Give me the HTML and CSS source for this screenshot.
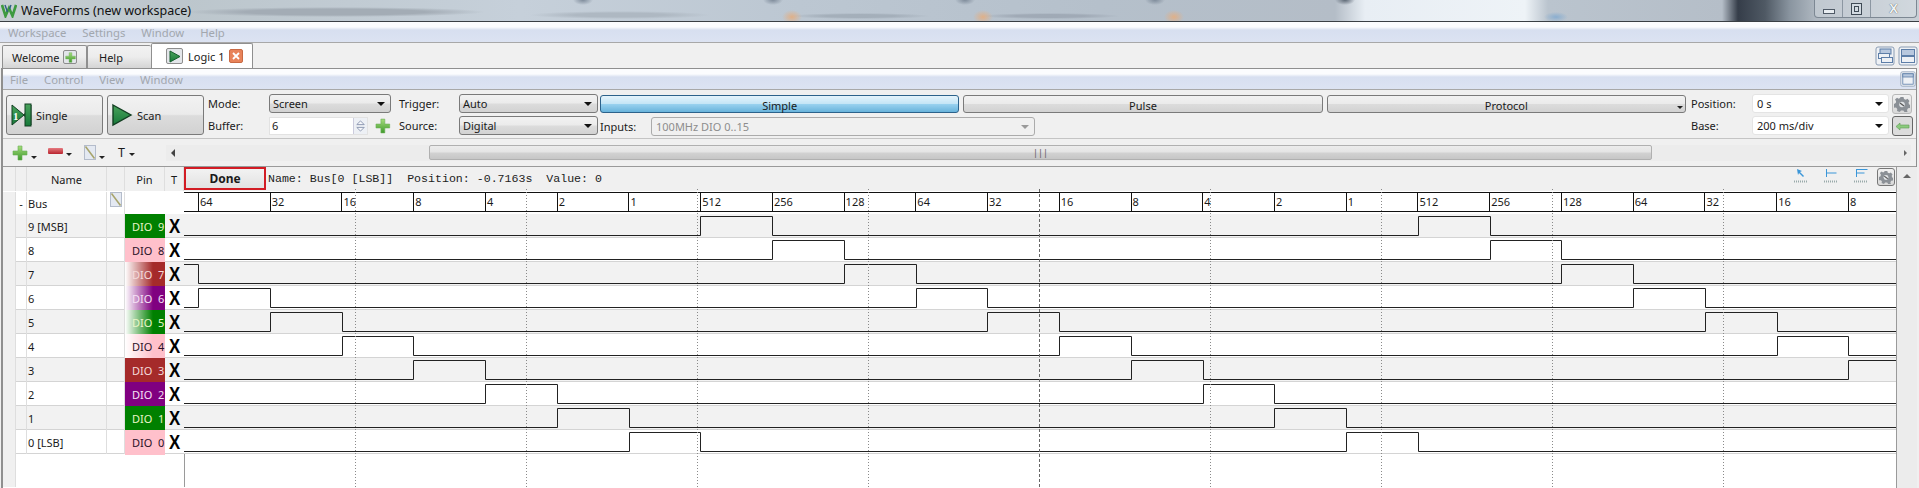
FILE: index.html
```html
<!DOCTYPE html>
<html lang="en">
<head>
    <meta charset="UTF-8">
    <title>WaveForms</title>
    <link rel="stylesheet" href="styles.css">
</head>
<body>
    <svg class="defs" width="0" height="0">
        <defs>
            <linearGradient id="gPlus" x1="0" y1="0" x2="0" y2="1">
                <stop offset="0" stop-color="#a5dc7c"/>
                <stop offset="1" stop-color="#3f9a2c"/>
            </linearGradient>
            <linearGradient id="gPlay" x1="0" y1="0" x2="0" y2="1">
                <stop offset="0" stop-color="#4aa35c"/>
                <stop offset="1" stop-color="#17793a"/>
            </linearGradient>
            <symbol id="plus" viewBox="0 0 16 16">
                <path d="M6 1h4v5h5v4h-5v5H6v-5H1V6h5z" fill="url(#gPlus)" stroke="#6aae55" stroke-width=".6"/>
            </symbol>
            <symbol id="edit" viewBox="0 0 12 16">
                <rect x=".5" y=".5" width="11" height="14" fill="#e4e9f2" stroke="#b4bccb"/>
                <path d="M1.500 1.500L10.500 13.500" stroke="#a8a46c" stroke-width="1.600"/>
            </symbol>
            <symbol id="gear" viewBox="0 0 16 16">
                <path d="M6.500 1h3l.5 2 1.800.8 1.700-1 2 2.200-1 1.600.5 1.900L16.500 9l-.5 3-2 .3-1 1.600.5 2h-3l-1.200-1.500H7l-1.300 1.500-2.700-1 .3-2-1.300-1.300-2 .2L0 8l1.800-.9.3-1.900L1 3.500 3 1.800l1.700 1 1.300-.8z" fill="#8b9096"/>
                <circle cx="8" cy="8.500" r="2.800" fill="#dfe2e5"/>
                <path d="M6 7l4 3" stroke="#555" stroke-width="1.200"/>
            </symbol>
            <symbol id="win" viewBox="0 0 20 20">
                <rect x="1" y="1" width="18" height="18" rx="2" fill="#eef1f5" stroke="#8b9db4" stroke-width="1"/>
            </symbol>
        </defs>
    </svg>

    <div class="titlebar">
        <svg class="logo" width="16" height="15" viewBox="0 0 16 15">
            <path d="M1 2l3.500 11L8 5l3.500 8L15 2" fill="none" stroke="#3d9a3f" stroke-width="2.600"/>
            <path d="M4 2l2.500 7M10 2L8.500 6" fill="none" stroke="#2c5e86" stroke-width="1.400"/>
        </svg>
        <span class="app-title">WaveForms (new workspace)</span>
        <div class="win-controls">
            <span class="win-btn win-min"><i></i></span>
            <span class="win-btn win-max"><i></i></span>
            <span class="win-btn win-close">X</span>
        </div>
    </div>

    <div class="menubar">
        <span>Workspace</span><span>Settings</span><span>Window</span><span>Help</span>
    </div>

    <div class="tabbar">
        <div class="tab">Welcome
            <span class="tab-icon"><svg width="11" height="11"><use href="#plus"/></svg></span>
        </div>
        <div class="tab tab-help">Help</div>
        <div class="tab tab-active">
            <span class="tab-icon tab-play"><svg width="13" height="13" viewBox="0 0 13 13"><path d="M2 1l10 5.500L2 12z" fill="url(#gPlay)" stroke="#145c2c"/></svg></span>
            Logic 1
            <span class="tab-close">
                <svg width="8" height="8" viewBox="0 0 8 8"><path d="M1 1l6 6M7 1L1 7" stroke="#fff" stroke-width="1.800"/></svg>
            </span>
        </div>
        <div class="corner-btns">
            <svg class="corner-icon" width="20" height="20"><use href="#win"/><rect x="5" y="3" width="11" height="5" fill="#b8c8de" stroke="#5d7ea8"/><rect x="3.500" y="7.500" width="11" height="5" fill="#eef1f5" stroke="#5d7ea8"/><rect x="6.500" y="11.500" width="11" height="5" fill="#eef1f5" stroke="#5d7ea8"/></svg>
            <svg class="corner-icon" width="20" height="20"><use href="#win"/><rect x="3.500" y="3.500" width="13" height="6" fill="#b8c8de" stroke="#5d7ea8"/><rect x="3.500" y="10.500" width="13" height="6" fill="#eef1f5" stroke="#5d7ea8"/></svg>
        </div>
    </div>

    <div class="tool-window">
        <div class="menubar submenu">
            <span>File</span><span>Control</span><span>View</span><span>Window</span>
            <svg class="corner-icon sub-corner" width="16" height="16" viewBox="0 0 20 20"><use href="#win"/><rect x="3.500" y="3.500" width="13" height="13" fill="#eef1f5" stroke="#5d7ea8"/><rect x="3.500" y="3.500" width="13" height="4" fill="#b8c8de" stroke="#5d7ea8"/></svg>
        </div>

        <div class="toolbar">
            <button class="big-btn">
                <svg width="21" height="24" viewBox="0 0 21 24">
                    <path d="M1 2l12 10L1 22z M13 12l7-10v20z" fill="url(#gPlay)" stroke="#123f22"/>
                    <rect x="14" y="1" width="6" height="22" fill="url(#gPlay)" stroke="#123f22"/>
                    <text x="2" y="17" class="step-num">1</text>
                </svg>
                Single
            </button>
            <button class="big-btn">
                <svg width="21" height="24" viewBox="0 0 21 24"><path d="M1 2l18 10L1 22z" fill="url(#gPlay)" stroke="#123f22" stroke-width="1.400"/></svg>
                Scan
            </button>

            <div class="fields">
                <label>Mode:</label>
                <div class="combo">Screen</div>
                <label>Buffer:</label>
                <div class="buffer">
                    <div class="spin">
                        <span>6</span>
                        <svg class="spin-arrows" width="14" height="16" viewBox="0 0 14 16"><path d="M7 2.500l4 4H3zM7 13.500l4-4H3z" fill="#f6f7fa" stroke="#8a96b0"/></svg>
                    </div>
                    <svg width="16" height="16"><use href="#plus"/></svg>
                </div>
            </div>
            <div class="fields fields-trigger">
                <label>Trigger:</label>
                <div class="combo">Auto</div>
                <label>Source:</label>
                <div class="combo">Digital</div>
            </div>

            <div class="trigger-panel">
                <div class="mode-btns">
                    <button class="mode-btn mode-on">Simple</button>
                    <button class="mode-btn">Pulse</button>
                    <button class="mode-btn mode-menu">Protocol</button>
                </div>
                <div class="inputs-row">
                    <label>Inputs:</label>
                    <div class="combo combo-off">100MHz DIO 0..15</div>
                </div>
            </div>

            <div class="fields fields-time">
                <label>Position:</label>
                <div class="combo combo-white">0 s</div>
                <label>Base:</label>
                <div class="combo combo-white">200 ms/div</div>
            </div>
            <div class="side-btns">
                <span class="side-btn"><svg width="16" height="16"><use href="#gear"/></svg></span>
                <span class="side-btn side-green"><svg width="15" height="9" viewBox="0 0 15 9"><path d="M1 4.500L5 1v2h9v3H5v2z" fill="#8ccb7e" stroke="#5e9a55" stroke-width=".6"/></svg></span>
            </div>
        </div>

        <div class="signal-tools">
            <span class="drop"><svg width="16" height="16"><use href="#plus"/></svg><i></i></span>
            <span class="drop drop-minus"><b></b><i></i></span>
            <span class="drop drop-edit"><svg width="12" height="16"><use href="#edit"/></svg><i></i></span>
            <span class="drop drop-t">T<i></i></span>
            <div class="hscroll">
                <i class="arrow-left"></i>
                <div class="hthumb"><span>|||</span></div>
                <i class="arrow-right"></i>
            </div>
        </div>

        <div class="logic">
            <div class="head-row">
                <span class="strip"></span><span class="strip strip-head"></span>
                <span class="head-cell">Name</span>
                <span class="head-cell"></span>
                <span class="head-cell">Pin</span>
                <span class="head-cell">T</span>
                <div class="status">
                    <div class="done">Done</div>
                    <span class="status-text">Name: Bus[0 [LSB]]  Position: -0.7163s  Value: 0</span>
                    <div class="cursor-tools">
                        <svg width="14" height="15" viewBox="0 0 14 15"><path d="M3 1l5 2-2 1 4 4-1 1-4-4-1 2z" fill="#3b96d8"/><path d="M0 13.500h14" stroke="#9aa" stroke-dasharray="1 1" stroke-width="2"/></svg>
                        <svg width="14" height="15" viewBox="0 0 14 15"><path d="M2.500 1v8M2.500 5h10" stroke="#3b96d8" fill="none"/><path d="M0 13.500h14" stroke="#9aa" stroke-dasharray="1 1" stroke-width="2"/></svg>
                        <svg width="14" height="15" viewBox="0 0 14 15"><path d="M2.500 1v8M2.500 1.500h11M2.500 5h8" stroke="#3b96d8" fill="none"/><path d="M0 13.500h14" stroke="#9aa" stroke-dasharray="1 1" stroke-width="2"/></svg>
                        <span class="side-btn cursor-gear"><svg width="14" height="14"><use href="#gear"/></svg></span>
                    </div>
                </div>
            </div>

            <div class="row row-bus">
                <span class="strip"></span>
                <span class="strip bus-dash">-</span>
                <span class="cell-name">Bus</span>
                <span class="cell-icon"><svg width="12" height="16"><use href="#edit"/></svg></span>
                <span class="cell-blank"></span>
                <span class="cell-blank"></span>
                <div class="ruler">
                    <span class="tick-first"></span>
                    <span>64</span><span>32</span><span>16</span><span>8</span><span>4</span><span>2</span><span>1</span>
                    <span>512</span><span>256</span><span>128</span><span>64</span><span>32</span><span>16</span><span>8</span><span>4</span><span>2</span><span>1</span>
                    <span>512</span><span>256</span><span>128</span><span>64</span><span>32</span><span>16</span><span>8</span>
                </div>
            </div>

            <div class="row row-alt">
                <span class="strip"></span><span class="strip"></span>
                <span class="cell-name">9 [MSB]</span><span class="cell-icon"></span>
                <span class="pin pin-green">DIO  9</span><span class="cell-t">X</span>
                <svg class="wave" viewBox="0 0 1712 24"><polyline points="0,21.500 516.500,21.500 516.500,2.500 588.500,2.500 588.500,21.500 1234.500,21.500 1234.500,2.500 1306.500,2.500 1306.500,21.500 1712,21.500"/></svg>
            </div>
            <div class="row">
                <span class="strip"></span><span class="strip"></span>
                <span class="cell-name">8</span><span class="cell-icon"></span>
                <span class="pin pin-pink">DIO  8</span><span class="cell-t">X</span>
                <svg class="wave" viewBox="0 0 1712 24"><polyline points="0,21.500 588.500,21.500 588.500,2.500 660.500,2.500 660.500,21.500 1306.500,21.500 1306.500,2.500 1377.500,2.500 1377.500,21.500 1712,21.500"/></svg>
            </div>
            <div class="row row-alt">
                <span class="strip"></span><span class="strip"></span>
                <span class="cell-name">7</span><span class="cell-icon"></span>
                <span class="pin pin-brown pin-fade">DIO  7</span><span class="cell-t">X</span>
                <svg class="wave" viewBox="0 0 1712 24"><polyline points="0,2.500 14.500,2.500 14.500,21.500 660.500,21.500 660.500,2.500 732.500,2.500 732.500,21.500 1377.500,21.500 1377.500,2.500 1449.500,2.500 1449.500,21.500 1712,21.500"/></svg>
            </div>
            <div class="row">
                <span class="strip"></span><span class="strip"></span>
                <span class="cell-name">6</span><span class="cell-icon"></span>
                <span class="pin pin-purple pin-fade">DIO  6</span><span class="cell-t">X</span>
                <svg class="wave" viewBox="0 0 1712 24"><polyline points="0,21.500 14.500,21.500 14.500,2.500 86.500,2.500 86.500,21.500 732.500,21.500 732.500,2.500 803.500,2.500 803.500,21.500 1449.500,21.500 1449.500,2.500 1521.500,2.500 1521.500,21.500 1712,21.500"/></svg>
            </div>
            <div class="row row-alt">
                <span class="strip"></span><span class="strip"></span>
                <span class="cell-name">5</span><span class="cell-icon"></span>
                <span class="pin pin-green pin-fade">DIO  5</span><span class="cell-t">X</span>
                <svg class="wave" viewBox="0 0 1712 24"><polyline points="0,21.500 86.500,21.500 86.500,2.500 158.500,2.500 158.500,21.500 803.500,21.500 803.500,2.500 875.500,2.500 875.500,21.500 1521.500,21.500 1521.500,2.500 1593.500,2.500 1593.500,21.500 1712,21.500"/></svg>
            </div>
            <div class="row">
                <span class="strip"></span><span class="strip"></span>
                <span class="cell-name">4</span><span class="cell-icon"></span>
                <span class="pin pin-pink pin-fade">DIO  4</span><span class="cell-t">X</span>
                <svg class="wave" viewBox="0 0 1712 24"><polyline points="0,21.500 158.500,21.500 158.500,2.500 229.500,2.500 229.500,21.500 875.500,21.500 875.500,2.500 947.500,2.500 947.500,21.500 1593.500,21.500 1593.500,2.500 1664.500,2.500 1664.500,21.500 1712,21.500"/></svg>
            </div>
            <div class="row row-alt">
                <span class="strip"></span><span class="strip"></span>
                <span class="cell-name">3</span><span class="cell-icon"></span>
                <span class="pin pin-brown">DIO  3</span><span class="cell-t">X</span>
                <svg class="wave" viewBox="0 0 1712 24"><polyline points="0,21.500 229.500,21.500 229.500,2.500 301.500,2.500 301.500,21.500 947.500,21.500 947.500,2.500 1019.500,2.500 1019.500,21.500 1664.500,21.500 1664.500,2.500 1712,2.500"/></svg>
            </div>
            <div class="row">
                <span class="strip"></span><span class="strip"></span>
                <span class="cell-name">2</span><span class="cell-icon"></span>
                <span class="pin pin-purple">DIO  2</span><span class="cell-t">X</span>
                <svg class="wave" viewBox="0 0 1712 24"><polyline points="0,21.500 301.500,21.500 301.500,2.500 373.500,2.500 373.500,21.500 1019.500,21.500 1019.500,2.500 1090.500,2.500 1090.500,21.500 1712,21.500"/></svg>
            </div>
            <div class="row row-alt">
                <span class="strip"></span><span class="strip"></span>
                <span class="cell-name">1</span><span class="cell-icon"></span>
                <span class="pin pin-green">DIO  1</span><span class="cell-t">X</span>
                <svg class="wave" viewBox="0 0 1712 24"><polyline points="0,21.500 373.500,21.500 373.500,2.500 445.500,2.500 445.500,21.500 1090.500,21.500 1090.500,2.500 1162.500,2.500 1162.500,21.500 1712,21.500"/></svg>
            </div>
            <div class="row">
                <span class="strip"></span><span class="strip"></span>
                <span class="cell-name">0 [LSB]</span><span class="cell-icon"></span>
                <span class="pin pin-pink">DIO  0</span><span class="cell-t">X</span>
                <svg class="wave" viewBox="0 0 1712 24"><polyline points="0,21.500 445.500,21.500 445.500,2.500 516.500,2.500 516.500,21.500 1162.500,21.500 1162.500,2.500 1234.500,2.500 1234.500,21.500 1712,21.500"/></svg>
            </div>

            <div class="row-empty">
                <span class="strip"></span>
                <span class="empty-plot"></span>
            </div>

            <!-- dotted time divisions, over the rows -->
            <svg class="divisions" width="1712" height="299">
                <path d="M171.500 0V299M342.500 0V299M513.500 0V299M684.500 0V299M1026.500 0V299M1197.500 0V299M1368.500 0V299M1539.500 0V299"/>
                <path class="division-mid" d="M855.500 0V299"/>
            </svg>

            <div class="vscroll"><i></i></div>
        </div>
    </div>
</body>
</html>
```

FILE: styles.css
```css
*{
    margin: 0;
    padding: 0;
    box-sizing: border-box;
}

html, body{
    width: 1919px;
    height: 488px;
    overflow: hidden;
}

body{
    background: #f0f0f0;
    font: 11px "Noto Sans", "Open Sans", sans-serif;
    color: #1a1a1a;
}

i{
    display: block;
}

button{
    font: inherit;
    color: inherit;
}

.defs{
    position: absolute;
}

/* title bar, with the blurred desktop behind it */
.titlebar{
    height: 22px;
    display: flex;
    align-items: center;
    border-bottom: 1px solid #3a3f44;
    background:
        radial-gradient(ellipse 10px 7px at 792px 17px, #e0b088, transparent),
        radial-gradient(ellipse 10px 7px at 983px 17px, #e0b088, transparent),
        radial-gradient(ellipse 10px 7px at 1174px 17px, #e0b088, transparent),
        radial-gradient(ellipse 12px 5px at 1556px 17px, #8aaed0, transparent),
        radial-gradient(ellipse 10px 5px at 583px 0, #7f8c9b, transparent),
        radial-gradient(ellipse 10px 5px at 773px 0, #7f8c9b, transparent),
        radial-gradient(ellipse 10px 5px at 965px 0, #7f8c9b, transparent),
        radial-gradient(ellipse 10px 5px at 1155px 0, #7f8c9b, transparent),
        radial-gradient(ellipse 10px 5px at 1345px 0, #5e6976, transparent),
        radial-gradient(ellipse 150px 5px at 335px 12px, #a3acb5 60%, transparent),
        radial-gradient(ellipse 90px 4px at 620px 15px, #aeb8c2 50%, transparent),
        radial-gradient(ellipse 70px 3px at 860px 16px, #a4afba 50%, transparent),
        radial-gradient(ellipse 70px 3px at 1050px 16px, #a0aab6 50%, transparent),
        linear-gradient(90deg, #c6ced3 0, #bcc6cc 180px, #c6d0da 520px, #bcc7d2 800px, #b5c0cb 1100px, #b4bdc7 1335px, #e8eef4 1365px, #eef3f7 1525px, #bac4ce 1548px, #b5bec8 1722px, #353d49 1738px, #4f5964 1765px, #8a95a0 1790px, #aeb7c0 1815px, #c9d0d6 1919px);
}

.logo{
    margin-left: 1px;
}

.app-title{
    margin-left: 4px;
    font-size: 12.500px;
    color: #111;
}

.win-controls{
    margin-left: auto;
    align-self: flex-start;
    margin-right: 2px;
    width: 103px;
    height: 18px;
    display: flex;
    border: 1px solid #7d8893;
    border-top: none;
    border-radius: 0 0 4px 4px;
    background: rgba(225, 232, 238, 0.35);
}

.win-btn{
    display: flex;
    align-items: center;
    justify-content: center;
    width: 28px;
    border-right: 1px solid #8c97a2;
}

.win-close{
    flex: 1;
    border-right: none;
    font: bold 13px "Liberation Sans", sans-serif;
    color: #f0f4f6;
    text-shadow: 0 0 1px #333;
}

.win-min i{
    width: 12px;
    height: 5px;
    margin-top: 5px;
    background: #e8edf1;
    border: 1px solid #4f5a66;
}

.win-max i{
    width: 11px;
    height: 12px;
    background: #d2dae1;
    border: 1px solid #3f4a55;
    box-shadow: inset 0 0 0 2px #d2dae1, inset 0 0 0 3px #3f4a55;
}

/* menu bars */
.menubar{
    height: 21px;
    display: flex;
    align-items: center;
    gap: 16px;
    padding-left: 8px;
    color: #a2a7ae;
    font-size: 11.300px;
    border-bottom: 1px solid #a8a8a8;
    background: linear-gradient(#fbfcfe 0, #fbfcfe 25%, #d7dff0 40%, #dce3f2 100%);
}

.tabbar{
    height: 25px;
    display: flex;
    align-items: flex-end;
    padding-left: 2px;
}

.tab{
    height: 23px;
    width: 85px;
    display: flex;
    align-items: center;
    gap: 4px;
    padding-left: 9px;
    border: 1px solid #8f8f8f;
    border-bottom: none;
    border-radius: 2px 2px 0 0;
    background: linear-gradient(#f2f2f2 0, #ececec 50%, #d4d4d4 100%);
}

.tab-help{
    width: 64px;
    padding-left: 11px;
    border-right: none;
}

.tab-active{
    height: 25px;
    width: 102px;
    padding-left: 14px;
    background: #fff;
    gap: 5px;
}

.tab-icon{
    width: 14px;
    height: 14px;
    display: flex;
    align-items: center;
    justify-content: center;
    background: #e3e6ea;
    border: 1px solid #8d8d8d;
    border-radius: 2px;
}

.tab-play{
    width: 17px;
    height: 16px;
}

.tab-close{
    width: 14px;
    height: 14px;
    display: flex;
    align-items: center;
    justify-content: center;
    background: #e8835a;
    border: 1px solid #c96a44;
    border-radius: 2px;
}

.corner-btns{
    margin-left: auto;
    align-self: center;
    display: flex;
    gap: 3px;
    margin-right: 1px;
}

.tool-window{
    height: 420px;
    margin-left: 1px;
    margin-right: 2px;
    border: 1px solid #8f8f8f;
    border-width: 1px 1px 0 2px;
    display: flex;
    flex-direction: column;
}

.submenu{
    flex: none;
    gap: 16px;
    padding-left: 7px;
}

.sub-corner{
    margin-left: auto;
}

/* main toolbar */
.toolbar{
    flex: none;
    height: 49px;
    display: flex;
    align-items: flex-start;
    padding: 4px 0 0 3px;
    border-bottom: 1px solid #c4c4c4;
}

.big-btn{
    width: 97px;
    height: 40px;
    margin: 1px 4px 0 0;
    display: flex;
    align-items: center;
    gap: 4px;
    padding-left: 4px;
    border: 1px solid #7a7a7a;
    border-radius: 3px;
    background: linear-gradient(#f2f2f2 0, #ebebeb 48%, #dcdcdc 52%, #d2d2d2 100%);
}

.step-num{
    font: bold 11px "Liberation Serif", serif;
    fill: #fff;
}

.fields{
    display: grid;
    grid-template-columns: 61px 122px;
    grid-template-rows: 19px 19px;
    row-gap: 3px;
    align-items: center;
    margin-right: 8px;
}

.fields-trigger{
    grid-template-columns: 60px 139px;
    margin-right: 2px;
}

.fields-time{
    grid-template-columns: 61px 137px;
    margin-right: 3px;
}

.combo{
    height: 19px;
    display: flex;
    align-items: center;
    padding-left: 3px;
    border: 1px solid #7a7a7a;
    border-radius: 3px;
    background: linear-gradient(#f2f2f2 0, #ebebeb 48%, #dcdcdc 52%, #d2d2d2 100%);
    position: relative;
}

.combo::after{
    content: "";
    position: absolute;
    right: 5px;
    top: 7px;
    border: 4px solid transparent;
    border-top: 4px solid #111;
    border-bottom: none;
}

.combo-white{
    background: #fff;
    border-color: #e4e4e4;
    padding-left: 4px;
}

.combo-off{
    flex: 1;
    color: #8d8d8d;
    background: #f0f0f0;
    border-color: #ababab;
    padding-left: 4px;
}

.combo-off::after{
    border-top-color: #9a9a9a;
}

.buffer{
    display: flex;
    align-items: center;
    gap: 7px;
}

.spin{
    width: 101px;
    height: 18px;
    display: flex;
    align-items: center;
    justify-content: space-between;
    padding-left: 2px;
    background: #fff;
    border: 1px solid #e2e2e2;
}

.spin-arrows{
    border-left: 1px solid #ccd;
    background: #edf0f5;
}

.trigger-panel{
    width: 1086px;
    margin-right: 5px;
}

.mode-btns{
    display: flex;
    gap: 4px;
    height: 18px;
    margin-top: 1px;
}

.mode-btn{
    flex: 1;
    padding-top: 2px;
    border: 1px solid #7a7a7a;
    border-radius: 3px;
    background: linear-gradient(#f2f2f2 0, #ebebeb 48%, #dcdcdc 52%, #d2d2d2 100%);
    position: relative;
}

.mode-on{
    border-color: #2c628b;
    background: linear-gradient(#e5f4fc 0, #c4e5f6 48%, #98d1ef 52%, #68b3db 100%);
}

.mode-menu::after{
    content: "";
    position: absolute;
    right: 2px;
    bottom: 3px;
    border: 3px solid transparent;
    border-top: 3px solid #222;
    border-bottom: none;
}

.inputs-row{
    display: flex;
    align-items: center;
    margin-top: 4px;
    width: 435px;
}

.inputs-row label{
    width: 51px;
}

.side-btns{
    display: flex;
    flex-direction: column;
    gap: 2px;
    width: 21px;
}

.side-btn{
    width: 20px;
    height: 20px;
    display: flex;
    align-items: center;
    justify-content: center;
    border: 1px solid #b8b8b8;
    border-radius: 3px;
    background: linear-gradient(#f2f2f2, #d8d8d8);
}

.side-green{
    height: 20px;
    width: 21px;
    border-color: #666;
    background: #dcdcdc;
}

/* add / remove signals and the horizontal scroll */
.signal-tools{
    flex: none;
    height: 27px;
    display: flex;
    align-items: center;
    padding-left: 9px;
}

.drop{
    display: flex;
    align-items: flex-end;
    gap: 3px;
    width: 36px;
}

.drop i{
    width: 0;
    height: 0;
    margin-bottom: 2px;
    border: 3px solid transparent;
    border-top: 3px solid #222;
    border-bottom: none;
}

.drop-minus b{
    width: 15px;
    height: 6px;
    margin-bottom: 4px;
    border-radius: 1px;
    background: linear-gradient(#e57a80, #b8242e);
}

.drop-edit{
    width: 34px;
}

.drop-t{
    width: 32px;
    font-size: 12.500px;
    line-height: 16px;
    align-items: center;
    gap: 4px;
}

.drop-t i{
    margin-bottom: 0;
    margin-top: 3px;
}

.hscroll{
    margin-left: 16px;
    width: 1745px;
    height: 16px;
    display: flex;
    align-items: center;
    background: #ececec;
}

.arrow-left{
    margin-left: 5px;
    border: 4px solid transparent;
    border-right: 4px solid #444;
    border-left: none;
}

.hthumb{
    margin-left: 254px;
    width: 1223px;
    height: 15px;
    display: flex;
    align-items: center;
    justify-content: center;
    border: 1px solid #b0b0b0;
    border-radius: 2px;
    background: linear-gradient(#ececec 0, #e4e4e4 48%, #d2d2d2 52%, #c6c6c6 100%);
    font-size: 9px;
    color: #555;
}

.arrow-right{
    margin-left: auto;
    margin-right: 4px;
    border: 3px solid transparent;
    border-left: 3px solid #666;
    border-right: none;
}

/* signal table and plot */
.logic{
    flex: 1;
    position: relative;
    border-top: 1px solid #9a9a9a;
    background: #fff;
}

.head-row,
.row{
    display: grid;
    grid-template-columns: 13px 11px 80px 18px 40px 19px 1712px;
}

.head-row{
    height: 25px;
    background: #f0f0f0;
    border-bottom: 1px solid #fff;
}

.strip{
    background: #f0f0f0;
    border-right: 1px solid #dedede;
}

.strip + .strip{
    background: transparent;
}

.head-cell{
    display: flex;
    align-items: center;
    justify-content: center;
    border-right: 1px solid #dedede;
}

.status{
    display: flex;
    align-items: flex-start;
}

.done{
    width: 82px;
    height: 23px;
    display: flex;
    align-items: center;
    justify-content: center;
    font: bold 12px "Noto Sans", sans-serif;
    border: 2px solid #d21c24;
    background: linear-gradient(#f2f2f2, #e2e2e2);
}

.status-text{
    margin: 5px 0 0 2px;
    font: 11.600px "Liberation Mono", monospace;
    white-space: pre;
    color: #222;
}

.cursor-tools{
    margin: 1px 1px 0 auto;
    display: flex;
    gap: 16px;
    align-items: flex-start;
}

.cursor-gear{
    width: 18px;
    height: 18px;
    margin-left: -7px;
    border-color: #777;
}

.row{
    height: 24px;
    background: #fff;
    border-bottom: 1px solid #d4d4d4;
}

.row-alt{
    background: #f2f2f2;
}

.row-bus{
    height: 22px;
    border-bottom: none;
    background: #fff;
}

.bus-dash{
    display: flex;
    align-items: center;
    justify-content: center;
}

.cell-name{
    display: flex;
    align-items: center;
    padding-left: 1px;
    border-right: 1px solid #dedede;
}

.cell-icon{
    display: flex;
    justify-content: center;
    border-right: 1px solid #dedede;
}

.cell-blank{
    display: block;
}

.pin{
    display: flex;
    align-items: center;
    padding-left: 7px;
    white-space: pre;
    margin-bottom: -1px;
    overflow: hidden;
}

.pin-green{
    background-color: #008000;
    color: #e8f5c8;
}

.pin-pink{
    background-color: #ffc0cb;
    color: #2a1028;
}

.pin-brown{
    background-color: #a52a2a;
    color: #f4dada;
}

.pin-purple{
    background-color: #800080;
    color: #f5e0f5;
}

.pin-fade{
    background-image: linear-gradient(90deg, #fff 0, transparent 70%);
}

.cell-t{
    display: flex;
    align-items: center;
    justify-content: center;
    font: bold 21px "Liberation Sans", sans-serif;
    color: #000;
    transform: scaleX(.8);
}

.ruler{
    height: 20px;
    display: flex;
    border-top: 1px solid #111;
    border-bottom: 1px solid #111;
    overflow: hidden;
}

.ruler span{
    flex: 0 0 71.740px;
    padding-left: 1px;
    line-height: 18px;
    border-left: 1px solid #111;
}

.ruler .tick-first{
    flex: 0 0 14px;
    border-left: none;
}

.wave{
    display: block;
    width: 1712px;
    height: 24px;
}

.wave polyline{
    fill: none;
    stroke: #222;
    stroke-width: 1;
}

.row-empty{
    height: 33px;
    display: grid;
    grid-template-columns: 13px 168px 1712px;
}

.empty-plot{
    grid-column: 3;
    border-left: 1px solid #9a9a9a;
}

.divisions{
    position: absolute;
    left: 181px;
    top: 22px;
    pointer-events: none;
}

.divisions path{
    stroke: #8a8a8a;
    stroke-dasharray: 1 2;
    fill: none;
}

.divisions .division-mid{
    stroke: #666;
    stroke-dasharray: 3 2;
}

.vscroll{
    position: absolute;
    left: 1893px;
    top: 0;
    bottom: 0;
    width: 21px;
    background: #ececec;
    border-left: 1px solid #9a9a9a;
}

.vscroll i{
    margin: 7px 0 0 6px;
    width: 0;
    border: 4px solid transparent;
    border-bottom: 4px solid #666;
    border-top: none;
}
```
